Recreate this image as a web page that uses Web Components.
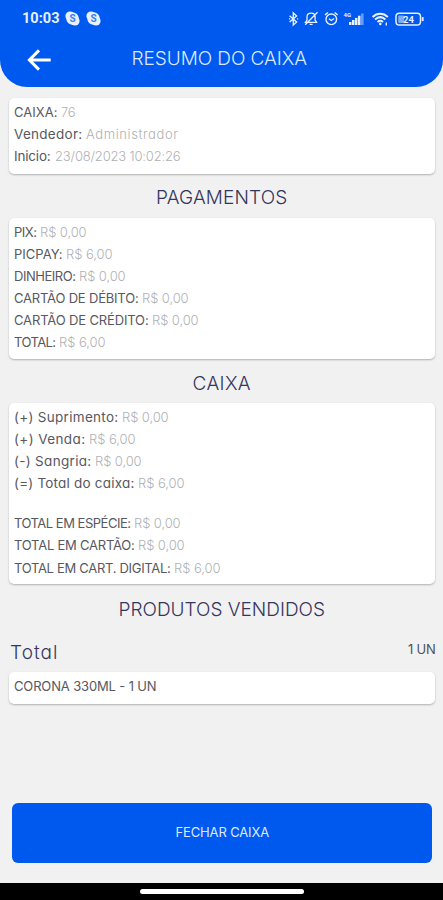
<!DOCTYPE html>
<html lang="pt-BR">
<head>
<meta charset="utf-8">
<meta name="viewport" content="width=device-width">
<title>Resumo do caixa</title>
<style>
html,body{margin:0;height:100%;background:#f1f1f1;overflow:hidden}
body{font-family:Inter,"Open Sans",sans-serif;font-feature-settings:"cv11";color:#50515a}
</style>
</head>
<body>
<cash-summary></cash-summary>
<script>
const define = (name, html, setup) => customElements.define(name, class extends HTMLElement {
  connectedCallback() {
    if (this.shadowRoot) return;
    this.attachShadow({mode: "open"}).innerHTML = html;
    if (setup) setup(this, this.shadowRoot);
  }
});

// Text tracked to fill the width given in its "w" attribute.
define("tracked-text", `<style>:host{display:block;flex:none;white-space:pre}span{display:inline-block}</style><span><slot></slot></span>`, (el, root) => {
  const span = root.querySelector("span"), w = +el.getAttribute("w");
  el.style.width = w + "px";
  const natural = span.getBoundingClientRect().width;
  span.style.letterSpacing = (w + .5 - natural) / el.textContent.length + "px";
});

define("info-row", `<style>
:host{display:flex;height:22.1px;line-height:22px;font-size:13px;font-weight:400;color:#575861}
:host([mixed]) .l{font-size:13.500px}
.v{color:#b0b1b5;font-weight:300}
</style>`, (el, root) => {
  const a = n => el.getAttribute(n);
  const label = document.createElement("tracked-text");
  if (/[a-z]/.test(a("label"))) el.setAttribute("mixed", "");
  label.className = "l";
  label.textContent = a("label"); label.setAttribute("w", a("lw"));
  root.append(label);
  if (a("value")) {
    const value = document.createElement("tracked-text");
    value.className = "v"; value.textContent = a("value"); value.setAttribute("w", a("vw"));
    value.style.marginLeft = (a("gap") || 4) + "px";
    root.append(value);
  }
});

define("info-card", `<style>
:host{display:block;box-sizing:border-box;margin:0 8px 0 9px;padding:3px 5px 0;background:#fff;border-radius:5px;box-shadow:0 1px 2px #0004}
</style><slot></slot>`);

define("section-title", `<style>
:host{display:flex;justify-content:center;align-items:center;font-size:19px;font-weight:350;color:#35365d}
</style><slot></slot>`);

define("status-bar", `<style>
:host{display:flex;height:37px;align-items:center;padding:0 19px 0 22px;color:#e7f0ff}
.time{font:700 14.500px/18px Roboto,sans-serif}
svg{display:block;flex:none}
.s1{margin-left:6px}.s2{margin-left:6px}
.right{display:flex;align-items:center;margin-left:auto}
</style>
<tracked-text class="time" w="37">10:03</tracked-text>
<svg class="s1" width="15" height="15" viewBox="0 0 15 15"><circle cx="5" cy="5" r="4.6" fill="currentColor"/><circle cx="10" cy="10" r="4.6" fill="currentColor"/><circle cx="7.5" cy="7.5" r="6.2" fill="currentColor"/><text x="7.5" y="11.1" text-anchor="middle" font-family="Roboto" font-weight="700" font-size="10" fill="#3d80f0">S</text></svg>
<svg class="s2" width="15" height="15" viewBox="0 0 15 15"><circle cx="5" cy="5" r="4.6" fill="currentColor"/><circle cx="10" cy="10" r="4.6" fill="currentColor"/><circle cx="7.5" cy="7.5" r="6.2" fill="currentColor"/><text x="7.5" y="11.1" text-anchor="middle" font-family="Roboto" font-weight="700" font-size="10" fill="#3d80f0">S</text></svg>
<div class="right">
<svg width="137" height="18" viewBox="287 9.500 137 18" fill="none" stroke="currentColor" stroke-width="1.4">
<path d="M289.6 15.2l7 6.2-3.3 3V12.4l3.3 3-7 6.2"/><path d="M289 18.4h1.2M297 18.4h1.2" />
<path d="M305.5 21.8h11l-1.4-2.2v-3.2c0-2.2-1.3-3.8-4-3.8s-4.100 1.600-4.100 3.800v3.200zM309.600 23.900h3M305.200 24.200l12.300-12.500" stroke-width="1.300"/>
<circle cx="331.300" cy="18.800" r="5.300"/><path d="M325 14.400l3-2.400M337.600 14.400l-3-2.400M328.900 18.200l2.400 1.800 2.800-2"/>
<text x="343.600" y="16.400" font-family="Roboto" font-weight="700" font-size="6" fill="currentColor" stroke="none">4G</text>
<g fill="currentColor" stroke="none"><rect x="349" y="21.500" width="2.500" height="3"/><rect x="352" y="19.500" width="2.500" height="5"/><rect x="355" y="17.400" width="2.500" height="7.100"/><rect x="358" y="15.200" width="2.500" height="9.300"/><rect x="361" y="13" width="2.600" height="11.500" opacity=".45"/></g>
<path d="M372.600 16.400c4.600-4.200 10.600-4.200 15.200 0M375 18.900c3.300-2.800 7.200-2.800 10.400 0M377.500 21.400c1.800-1.500 3.700-1.500 5.500 0" stroke-width="2"/><circle cx="380.300" cy="23.400" r="1.300" fill="currentColor" stroke="none"/><path d="M386.300 22v3"/>
<rect x="396" y="12.700" width="24.500" height="11.800" rx="3.300" stroke-width="1.500"/><path d="M422.700 16.600v4" stroke-width="1.800"/><rect x="398.200" y="14.900" width="6" height="7.500" rx="1" fill="currentColor" stroke="none" opacity=".55"/>
<text x="408.400" y="22.100" text-anchor="middle" font-family="Roboto" font-weight="700" font-size="9.500" fill="currentColor" stroke="none">24</text>
</svg></div>`);

define("app-header", `<style>
:host{display:block;height:86.500px;background:#0059ee;border-radius:0 0 27px 27px;color:#dbe9ff}
.bar{display:grid;grid-template-columns:1fr auto 1fr;height:43px;align-items:center;font-size:19px;font-weight:300}
svg{display:block;margin-left:26px;margin-top:3px}
.title{margin-left:-5px}
</style><status-bar></status-bar><div class="bar">
<svg width="26" height="22" viewBox="0 0 26 22" fill="none" stroke="#fff" stroke-width="3"><path d="M24.700 11H3M13 1.400L3.400 11l9.600 9.600"/></svg>
<tracked-text class="title" w="175">RESUMO DO CAIXA</tracked-text></div>`);

define("primary-button", `<style>
:host{display:block}
button{display:flex;width:420px;height:60px;margin:0 0 0 12px;padding:0 0 2px;border:0;border-radius:6px;background:#0059ee;color:#deebff;align-items:center;justify-content:center;font:400 13px/20px Inter,sans-serif}
</style><button><slot></slot></button>`);

define("cash-summary", `<style>
:host{display:flex;flex-direction:column;width:443px;height:900px;overflow:hidden}
.total{display:flex;justify-content:space-between;margin:0 8px 0 10px;padding-top:17px;height:33px;color:#35365d;font-size:19px;font-weight:350;line-height:28px}
.total .n{font-size:13px;font-weight:400;line-height:20px;color:#50515a}
.blank{height:18px}
footer{display:flex;height:17px;background:#000;margin-top:auto;justify-content:center;align-items:center}
footer i{width:164px;height:5px;border-radius:3px;background:#fff;margin-top:-1px;margin-left:1px}
</style>
<app-header></app-header>
<info-card style="height:75.500px;margin-top:11.500px">
<info-row label="CAIXA:" lw="43" value="76" vw="14"></info-row>
<info-row label="Vendedor:" lw="68" value="Administrador" vw="92"></info-row>
<info-row label="Inicio:" lw="36" gap="5" value="23/08/2023 10:02:26" vw="125"></info-row>
</info-card>
<section-title style="height:44.500px;padding-top:4px;box-sizing:border-box"><tracked-text w="131">PAGAMENTOS</tracked-text></section-title>
<info-card style="height:141px">
<info-row label="PIX:" lw="22" value="R$ 0,00" vw="46"></info-row>
<info-row label="PICPAY:" lw="48" value="R$ 6,00" vw="46"></info-row>
<info-row label="DINHEIRO:" lw="61" value="R$ 0,00" vw="46"></info-row>
<info-row label="CARTÃO DE DÉBITO:" lw="124" value="R$ 0,00" vw="46"></info-row>
<info-row label="CARTÃO DE CRÉDITO:" lw="134" value="R$ 0,00" vw="46"></info-row>
<info-row label="TOTAL:" lw="41" value="R$ 6,00" vw="46"></info-row>
</info-card>
<section-title style="height:44px;padding-top:4px;box-sizing:border-box"><tracked-text w="58">CAIXA</tracked-text></section-title>
<info-card style="height:181px">
<info-row label="(+) Suprimento:" lw="104" value="R$ 0,00" vw="46"></info-row>
<info-row label="(+) Venda:" lw="71" value="R$ 6,00" vw="46"></info-row>
<info-row label="(-) Sangria:" lw="77" value="R$ 0,00" vw="46"></info-row>
<info-row label="(=) Total do caixa:" lw="120" value="R$ 6,00" vw="46"></info-row>
<div class="blank"></div>
<info-row label="TOTAL EM ESPÉCIE:" lw="116" value="R$ 0,00" vw="46"></info-row>
<info-row label="TOTAL EM CARTÃO:" lw="120" value="R$ 0,00" vw="46"></info-row>
<info-row label="TOTAL EM CART. DIGITAL:" lw="156" value="R$ 6,00" vw="46"></info-row>
</info-card>
<section-title style="height:26px;padding-top:12px"><tracked-text w="206">PRODUTOS VENDIDOS</tracked-text></section-title>
<div class="total"><tracked-text w="48">Total</tracked-text><tracked-text class="n" w="27">1 UN</tracked-text></div>
<info-card style="height:31.500px"><info-row label="CORONA 330ML - 1 UN" lw="142"></info-row></info-card>
<primary-button style="margin-top:99.500px"><tracked-text w="93">FECHAR CAIXA</tracked-text></primary-button>
<footer><i></i></footer>`);
</script>
</body>
</html>
